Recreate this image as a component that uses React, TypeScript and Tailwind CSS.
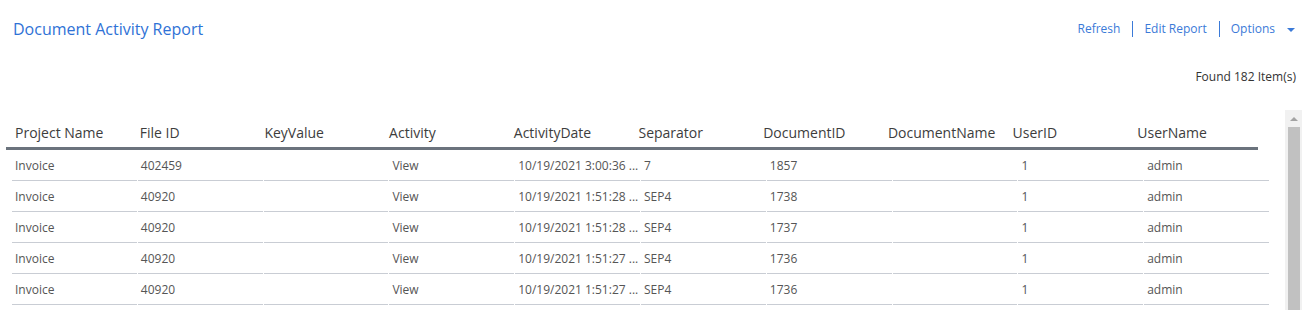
import React from "react";

const columns = [
  "Project Name",
  "File ID",
  "KeyValue",
  "Activity",
  "ActivityDate",
  "Separator",
  "DocumentID",
  "DocumentName",
  "UserID",
  "UserName",
];

const rows = [
  ["Invoice", "402459", "", "View", "10/19/2021 3:00:36 ...", "7", "1857", "", "1", "admin"],
  ["Invoice", "40920", "", "View", "10/19/2021 1:51:28 ...", "SEP4", "1738", "", "1", "admin"],
  ["Invoice", "40920", "", "View", "10/19/2021 1:51:28 ...", "SEP4", "1737", "", "1", "admin"],
  ["Invoice", "40920", "", "View", "10/19/2021 1:51:27 ...", "SEP4", "1736", "", "1", "admin"],
  ["Invoice", "40920", "", "View", "10/19/2021 1:51:27 ...", "SEP4", "1736", "", "1", "admin"],
];

export default function App() {
  return (
    <div className="w-[1310px] h-[310px] overflow-hidden bg-white font-['Open_Sans',sans-serif]">
      {/* Top bar */}
      <div className="flex items-center justify-between pl-[13px] pr-[15px] pt-[17px]">
        <h1 className="text-[16px] leading-[24px] text-[#2f72d6]">Document Activity Report</h1>
        <div className="flex items-center text-[12px] leading-[20px] text-[#3b7ad8]">
          <span>Refresh</span>
          <span className="ml-[12px] mr-[11px] h-[16px] w-px bg-[#3b7ad8]" />
          <span>Edit Report</span>
          <span className="ml-[12px] mr-[11px] h-[16px] w-px bg-[#3b7ad8]" />
          <span>Options</span>
          <span className="ml-[12px] mt-[2px] h-0 w-0 border-x-[4px] border-t-[4px] border-x-transparent border-t-[#3b7ad8]" />
        </div>
      </div>

      <div className="flex justify-end pr-[14px] pt-[27px] text-[12px] leading-[18px] text-[#333]">
        Found 182 Item(s)
      </div>

      {/* Grid + scrollbar */}
      <div className="mt-[24px] flex">
        <div className="w-[1285px]">
          <div className="ml-[6px] grid w-[1252px] grid-cols-10 border-b-[3px] border-[#6b737d] pr-[5px]">
            {columns.map((c) => (
              <div
                key={c}
                className="flex h-[37px] items-center pt-[8px] pl-[9px] text-[14px] font-[500] text-[#3d3d3d] whitespace-nowrap"
              >
                {c}
              </div>
            ))}
          </div>
          <div className="ml-[12px] w-[1257px]">
            {rows.map((r, i) => (
              <div key={i} className="grid grid-cols-10 gap-x-px">
                {r.map((v, j) => (
                  <div
                    key={j}
                    className="flex h-[31px] items-center border-b border-[#c9cdd4] pl-[3px] pt-[1px] text-[12px] text-[#555] whitespace-nowrap"
                  >
                    {v}
                  </div>
                ))}
              </div>
            ))}
          </div>
        </div>
        <div className="flex h-[200px] w-[17px] flex-col items-center bg-[#f1f1f1]">
          <span className="mt-[7px] h-0 w-0 border-x-[4px] border-b-[4px] border-x-transparent border-b-[#a3a3a3]" />
          <div className="mt-[6px] h-full w-[12px] bg-[#c1c1c1]" />
        </div>
      </div>
    </div>
  );
}
